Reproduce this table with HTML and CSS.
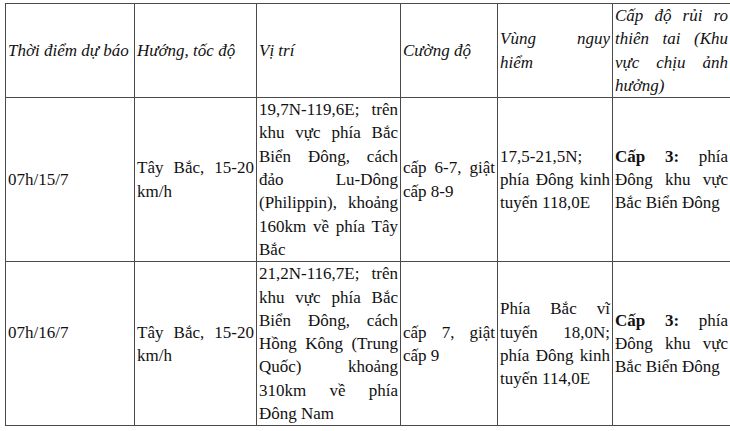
FILE: index.html
```html
<!DOCTYPE html>
<html lang="vi">
<head>
<meta charset="utf-8">
<title>Dự báo bão</title>
<link rel="stylesheet" href="styles.css">
</head>
<body>
<table class="forecast">
  <colgroup>
    <col class="c1"><col class="c2"><col class="c3"><col class="c4"><col class="c5"><col class="c6">
  </colgroup>
  <thead>
    <tr>
      <th>Thời điểm dự báo</th>
      <th>Hướng, tốc độ</th>
      <th>Vị trí</th>
      <th>Cường độ</th>
      <th><span class="jline">Vùng nguy</span>hiểm</th>
      <th>Cấp độ rủi ro thiên tai (Khu vực chịu ảnh hưởng)</th>
    </tr>
  </thead>
  <tbody>
    <tr>
      <td>07h/15/7</td>
      <td>Tây Bắc, 15-20 km/h</td>
      <td>19,7N-119,6E; trên khu vực phía Bắc Biển Đông, cách đảo Lu-Dông (Philippin), khoảng 160km về phía Tây Bắc</td>
      <td>cấp 6-7, giật cấp 8-9</td>
      <td>17,5-21,5N; phía Đông kinh tuyến 118,0E</td>
      <td><b>Cấp 3:</b> phía Đông khu vực Bắc Biển Đông</td>
    </tr>
    <tr>
      <td class="raised">07h/16/7</td>
      <td>Tây Bắc, 15-20 km/h</td>
      <td>21,2N-116,7E; trên khu vực phía Bắc Biển Đông, cách Hồng Kông (Trung Quốc) khoảng 310km về phía Đông Nam</td>
      <td>cấp 7, giật cấp 9</td>
      <td>Phía Bắc vĩ tuyến 18,0N; phía Đông kinh tuyến 114,0E</td>
      <td><b>Cấp 3:</b> phía Đông khu vực Bắc Biển Đông</td>
    </tr>
  </tbody>
</table>
</body>
</html>
```
FILE: styles.css
```css
html, body {
  margin: 0;
  padding: 0;
  background: #ffffff;
}
body {
  font-family: "Liberation Serif", "Times New Roman", serif;
  font-size: 17px;
  color: #111111;
  overflow: hidden;
}
.forecast {
  margin: 3px 0 0 5px;
  border-collapse: collapse;
  table-layout: fixed;
  width: 725px;
}
.c1 { width: 129px; }
.c2 { width: 122px; }
.c3 { width: 144px; }
.c4 { width: 97px; }
.c5 { width: 115px; }
.c6 { width: 118px; }
.forecast th,
.forecast td {
  border: 1px solid #4a4a4a;
  padding: 0 2px;
  line-height: 23.3px;
  vertical-align: middle;
  text-align: justify;
  font-weight: normal;
}
.forecast th {
  font-style: italic;
  line-height: 23.3px;
}
.jline {
  display: block;
  text-align: justify;
  text-align-last: justify;
}
.forecast td.raised {
  padding-bottom: 23px;
}
.forecast b {
  font-weight: bold;
}
```
